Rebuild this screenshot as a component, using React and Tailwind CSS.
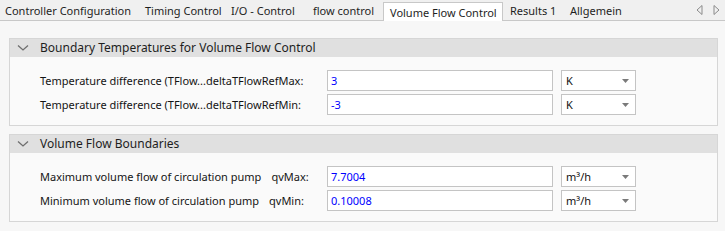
import React from "react";

const tabs = [
  { label: "Controller Configuration", w: "w-[138px]", pl: "pl-[5px]" },
  { label: "Timing Control", w: "w-[88px]", pl: "pl-[7px]" },
  { label: "I/O - Control", w: "w-[79px]", pl: "pl-[5px]" },
  { label: "flow control", w: "w-[78px]", pl: "pl-[8px]" },
  { label: "Volume Flow Control", w: "w-[120px]", pl: "pl-[6px]", active: true },
  { label: "Results 1", w: "w-[60px]", pl: "pl-[7px]" },
  { label: "Allgemein", w: "w-[62px]", pl: "pl-[7px]" },
];

const groups = [
  {
    title: "Boundary Temperatures for Volume Flow Control",
    rows: [
      { label: "Temperature difference (TFlow...deltaTFlowRefMax:", value: "3", unit: "K" },
      { label: "Temperature difference (TFlow...deltaTFlowRefMin:", value: "-3", unit: "K" },
    ],
  },
  {
    title: "Volume Flow Boundaries",
    rows: [
      { label: "Maximum volume flow of circulation pump", code: "qvMax:", value: "7.7004", unit: "m³/h" },
      { label: "Minimum volume flow of circulation pump", code: "qvMin:", value: "0.10008", unit: "m³/h" },
    ],
  },
];

const Group = ({ group }) => (
  <div className="border border-[#d6d6d6] bg-[#fafafa]">
    <div className="h-[18px] bg-[#e0e0e0] flex items-center">
      <svg width="12" height="8" viewBox="0 0 12 8" className="ml-[7px]">
        <path d="M1 1.5 L6 6 L11 1.5" fill="none" stroke="#6e6e6e" strokeWidth="1.3" />
      </svg>
      <span className="ml-[11px] text-[12px] text-[#1e1e1e]">{group.title}</span>
    </div>
    <div className="pt-[13px] pb-[10px] flex flex-col gap-[3px]">
      {group.rows.map((row, i) => (
        <div key={i} className="flex items-center h-[21px]">
          <div className="w-[317px] pl-[30px] text-[#141414] whitespace-nowrap">
            {row.label}
            {row.code && <span className="ml-[10px]">{row.code}</span>}
          </div>
          <div className="w-[226px] h-[21px] border border-[#c4c4c4] bg-white pl-[3px] flex items-center text-[#0000ff]">
            {row.value}
          </div>
          <div className="ml-[8px] w-[75px] h-[21px] border border-[#c4c4c4] bg-white pl-[4px] pr-[6px] flex items-center justify-between text-[#111]">
            <span>{row.unit}</span>
            <svg width="7" height="4" viewBox="0 0 7 4">
              <path d="M0 0 L7 0 L3.5 4 Z" fill="#7a7a7a" />
            </svg>
          </div>
        </div>
      ))}
    </div>
  </div>
);

export default function App() {
  return (
    <div
      className="w-[725px] h-[231px] bg-[#f7f7f7] text-[11px] leading-none overflow-hidden"
      style={{ fontFamily: '"Noto Sans", "Open Sans", sans-serif' }}
    >
      <div className="h-[21px] bg-[#f0f0f0] border-b border-[#c8c8c8] flex items-end">
        {tabs.map((t) => (
          <div
            key={t.label}
            className={
              t.active
                ? `${t.w} ${t.pl} shrink-0 h-[19px] mb-[-1px] bg-white border border-b-0 border-[#c8c8c8] flex items-center text-[#1e1e1e] whitespace-nowrap`
                : `${t.w} ${t.pl} shrink-0 h-[19px] flex items-center text-[#1e1e1e] whitespace-nowrap`
            }
          >
            {t.label}
          </div>
        ))}
        <div className="ml-auto mr-[5px] h-[20px] flex items-center gap-[10px]">
          <svg width="7" height="10" viewBox="0 0 7 10">
            <path d="M6 0.5 L1 5 L6 9.5 Z" fill="none" stroke="#8a8a8a" strokeWidth="1" />
          </svg>
          <svg width="7" height="10" viewBox="0 0 7 10">
            <path d="M1 0.5 L6 5 L1 9.5 Z" fill="none" stroke="#8a8a8a" strokeWidth="1" />
          </svg>
        </div>
      </div>
      <div className="pt-[17px] pl-[9px] pr-[7px] flex flex-col gap-[8px]">
        {groups.map((g) => (
          <Group key={g.title} group={g} />
        ))}
      </div>
    </div>
  );
}
